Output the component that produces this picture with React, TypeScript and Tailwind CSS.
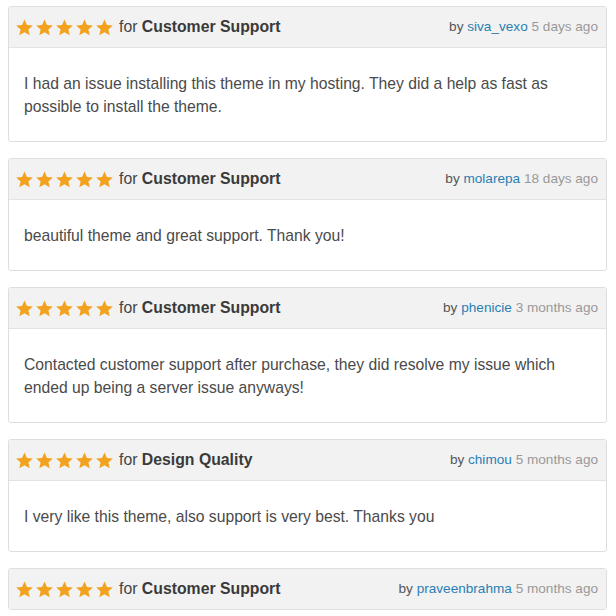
const reviews = [
  {
    category: "Customer Support",
    user: "siva_vexo",
    when: "5 days ago",
    text: "I had an issue installing this theme in my hosting. They did a help as fast as possible to install the theme.",
  },
  {
    category: "Customer Support",
    user: "molarepa",
    when: "18 days ago",
    text: "beautiful theme and great support. Thank you!",
  },
  {
    category: "Customer Support",
    user: "phenicie",
    when: "3 months ago",
    text: "Contacted customer support after purchase, they did resolve my issue which ended up being a server issue anyways!",
  },
  {
    category: "Design Quality",
    user: "chimou",
    when: "5 months ago",
    text: "I very like this theme, also support is very best. Thanks you",
  },
  {
    category: "Customer Support",
    user: "praveenbrahma",
    when: "5 months ago",
    text: "",
  },
];

function Star() {
  return (
    <svg viewBox="0 0 24 24" className="w-[19px] h-[19px]">
      <path
        d="M12 1.8l3.1 6.9 7.4.7-5.6 5 1.7 7.4L12 17.9l-6.6 3.9 1.7-7.4-5.6-5 7.4-.7z"
        fill="#f3a21f"
      />
    </svg>
  );
}

export default function App() {
  return (
    <div
      className="w-[616px] h-[616px] overflow-hidden bg-white pl-2 pr-[9px] pt-[6px] flex flex-col gap-4"
      style={{ fontFamily: '"Liberation Sans", Arial, sans-serif' }}
    >
      {reviews.map((r, i) => (
        <div key={i} className="shrink-0 border border-[#dedede] rounded-[3px] bg-white">
          <div className="h-[40px] bg-[#f2f2f2] flex items-center justify-between pl-[6px] pr-[8px] rounded-t-[3px]">
            <div className="flex items-center">
              <div className="flex items-center gap-[1px]">
                <Star />
                <Star />
                <Star />
                <Star />
                <Star />
              </div>
              <span className="ml-[5px] text-[15.8px] text-[#444]">
                for <span className="font-bold text-[#3a3a3a]">{r.category}</span>
              </span>
            </div>
            <div className="text-[13.6px] text-[#555]">
              by <span className="text-[#2a7fb4]">{r.user}</span>{" "}
              <span className="text-[#999]">{r.when}</span>
            </div>
          </div>
          {r.text && (
            <div className="border-t border-[#e3e3e3] pl-[15px] pr-6 pt-6 pb-[23px] text-[15.7px] leading-[23px] text-[#4a4a4a]">
              {r.text}
            </div>
          )}
        </div>
      ))}
    </div>
  );
}
